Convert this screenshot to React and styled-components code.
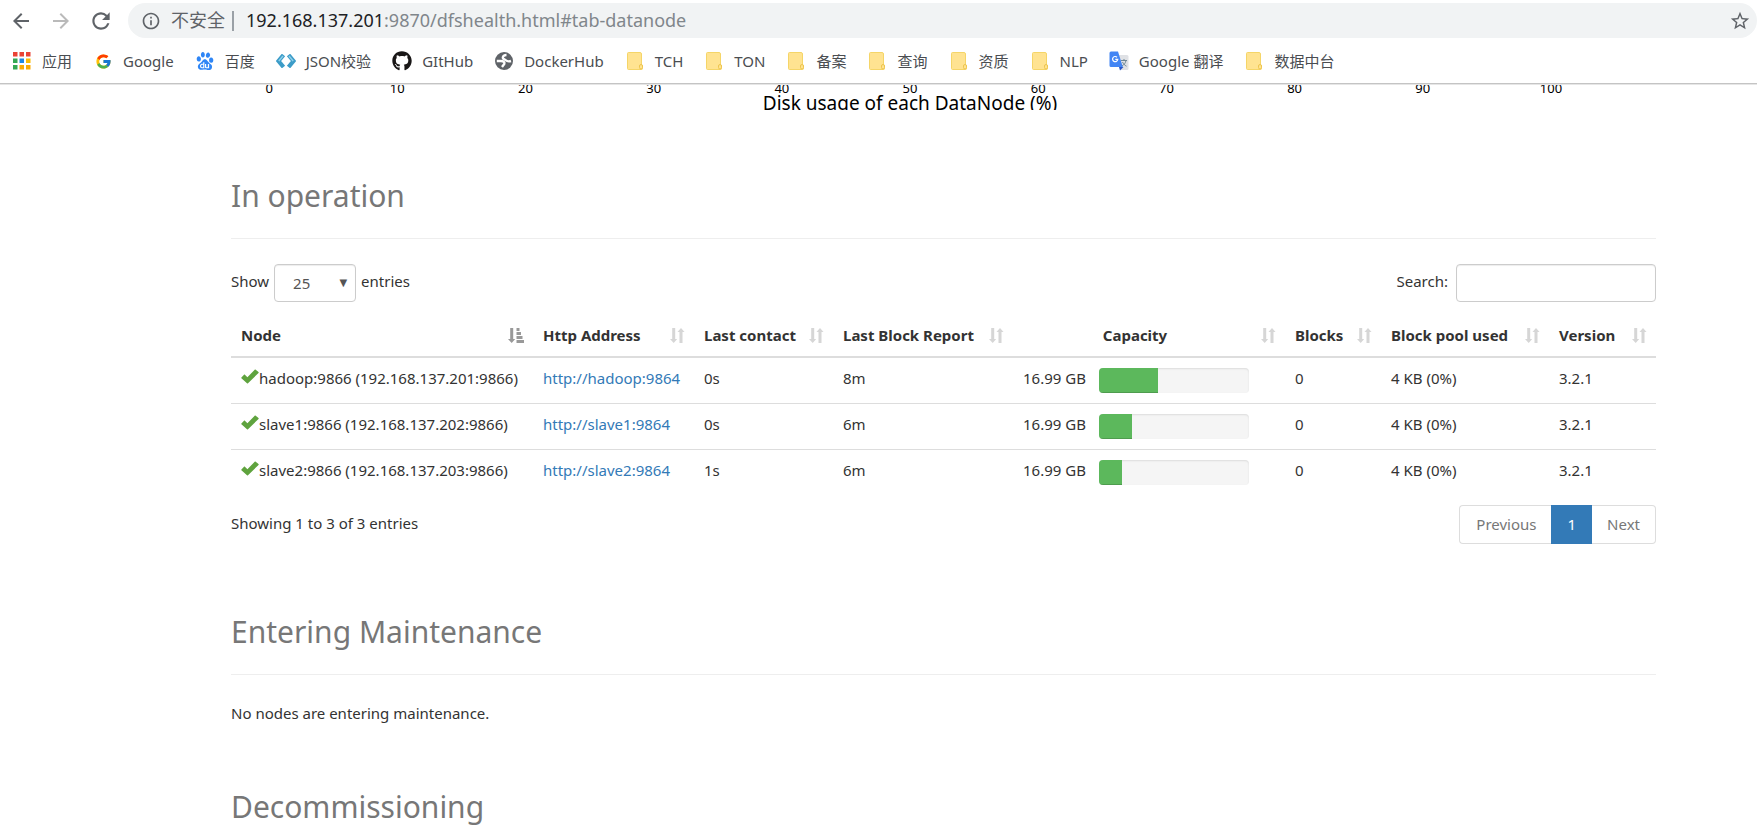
import React from 'react'
import styled, { createGlobalStyle } from 'styled-components'
import { FcGoogle } from 'react-icons/fc'
import { FaGithub } from 'react-icons/fa'
import { SiBaidu } from 'react-icons/si'
import { MdArrowBack, MdArrowForward, MdRefresh, MdInfoOutline, MdStarBorder } from 'react-icons/md'

const GlobalStyle = createGlobalStyle`
  * {
    box-sizing: border-box;
  }

  body {
    margin: 0;
    background: #fff;
    color: #333;
    font-family: 'Noto Sans', 'Noto Sans CJK SC', sans-serif;
    font-size: 15px;
    line-height: 21px;
  }

  button,
  input,
  select {
    font: inherit;
  }
`

/* ---------- icons ---------- */

const AppsIcon = () => (
  <svg width="18" height="18" viewBox="0 0 18 18">
    {['#ea4335', '#ea4335', '#ea4335', '#34a853', '#1e88e5', '#fbbc05', '#34a853', '#fbab05', '#fbab05'].map(
      (fill, i) => (
        <rect key={i} x={(i % 3) * 6.5} y={Math.floor(i / 3) * 6.5} width="4.5" height="4.5" fill={fill} />
      )
    )}
  </svg>
)

const JsonIcon = () => (
  <svg width="20" height="14" viewBox="0 0 20 14">
    <path d="M7.5 1 L2.5 7 L7.5 13" fill="none" stroke="#3c9cc8" strokeWidth="4.2" />
    <path d="M12.5 1 L17.5 7 L12.5 13" fill="none" stroke="#3c9cc8" strokeWidth="4.2" />
    <path d="M7 2 L2.8 7" stroke="#8ed0ea" strokeWidth="1.4" />
    <path d="M13 2 L17.2 7" stroke="#8ed0ea" strokeWidth="1.4" />
  </svg>
)

const GlobeIcon = () => (
  <svg width="18" height="18" viewBox="0 0 18 18">
    <circle cx="9" cy="9" r="9" fill="#5f6368" />
    <g fill="none" stroke="#fff" strokeWidth="2.4">
      <path d="M11.5 3C7.5 3 7 6.500 9 7.200S11.500 10.500 16 9" />
      <path d="M1.800 9H6c2.500 0 4 1.300 3.300 3L7 15" />
    </g>
  </svg>
)

const FolderIcon = () => (
  <svg width="16" height="18" viewBox="0 0 16 18">
    <path
      d="M1.5.5H13A1.5 1.5 0 0 1 14.5 2v10.5l1 .8v3.2a1 1 0 0 1-1 1h-13a1 1 0 0 1-1-1v-15a1 1 0 0 1 1-1z"
      fill="#ffe391"
      stroke="#f5d568"
    />
    <rect x="12.5" y="12.5" width="3" height="4.5" rx="1.5" fill="#ffe391" stroke="#eec54e" />
  </svg>
)

const TranslateIcon = () => (
  <svg width="20" height="20" viewBox="0 0 20 20">
    <path d="M8 4h10a1.5 1.5 0 0 1 1.5 1.5v12a1.5 1.5 0 0 1-1.5 1.5h-7z" fill="#dfe1e5" />
    <path d="M12 9.5h6M15 8v1.5M17 9.5c-.5 2.5-2 4.5-4 5.5M13.5 11c.8 1.8 2.2 3.2 4 4.2" fill="none" stroke="#6f8794" />
    <path d="M11 19.5l3.5-3.5H10z" fill="#2a56c6" />
    <path d="M2 .5h7L13.8 16H2a1.5 1.5 0 0 1-1.5-1.5V2A1.5 1.5 0 0 1 2 .5z" fill="#4285f4" />
    <path d="M8 6.2a2.6 2.6 0 1 0 .8 2.1H6.3" fill="none" stroke="#fff" strokeWidth="1.2" />
  </svg>
)

const OkIcon = () => (
  <svg width="18" height="15" viewBox="0 0 18 15">
    <path
      d="M.4 8.5L3 5.8c.3-.3.6-.3.9 0l2.5 2.4L13.7.7c.3-.3.7-.3 1 0l2.8 2.4c.3.3.3.6 0 .9L7 14.2c-.3.3-.7.3-1 0L.4 9.3c-.2-.3-.2-.5 0-.8z"
      fill="#5fa33e"
    />
  </svg>
)

const SortIcon = () => (
  <svg width="15" height="15" viewBox="0 0 15 15" fill="#d6d6d6">
    <path d="M2.2 0h3v11h2L3.7 15 0 11h2.2z" />
    <path d="M9.5 15h3V4h2L11 0 7.5 4h2z" />
  </svg>
)

const SortAscIcon = () => (
  <svg width="16" height="15" viewBox="0 0 16 15" fill="#999">
    <path d="M2.2 0h3v11h2L3.7 15 0 11h2.2z" />
    <path d="M8.5 0h3v3h-3zM8.5 4H13v3H8.5zM8.5 8h6v3h-6zM8.5 12H16v3H8.5z" />
  </svg>
)

/* ---------- browser bar ---------- */

const Browser = styled.header`
  padding-bottom: 1px;
  background: linear-gradient(#e6e6e6, #e6e6e6) bottom / 100% 1px no-repeat;
`

const Toolbar = styled.div`
  display: flex;
  align-items: center;
  gap: 14px;
  padding: 3px 0 0 8px;
`

const NavButton = styled.button`
  display: flex;
  align-items: center;
  justify-content: center;
  width: 26px;
  height: 26px;
  padding: 0;
  border: 0;
  background: none;
  color: ${({ disabled }) => (disabled ? '#bababa' : '#5f6368')};
`

const AddressBar = styled.div`
  flex: 1;
  display: flex;
  align-items: center;
  height: 35px;
  padding: 0 6px 0 13px;
  border-radius: 18px;
  background: #f1f3f4;
  color: #5f6368;
  font-size: 18px;
  line-height: 24px;
`

const Unsafe = styled.span`
  margin-left: 10px;
  padding: 0 7px 2px 0;
`

const Url = styled.span`
  flex: 1;
  padding: 0 0 2px 12px;
  color: #80868b;

  b {
    color: #202124;
    font-weight: 400;
  }
`

const UrlDivider = styled.span`
  width: 2px;
  height: 20px;
  background: #9aa0a6;
`

const Bookmarks = styled.nav`
  display: flex;
  gap: 21px;
  height: 46px;
  padding: 1px 12px 0;
  border-bottom: 1px solid #c4c4c4;
  white-space: nowrap;
`

const Bookmark = styled.a`
  display: flex;
  align-items: center;
  gap: 10px;
  color: #4a4d51;
  text-decoration: none;
`

const BookmarkIcon = styled.span`
  display: flex;
  justify-content: center;
  width: 20px;
`

const bookmarks = [
  { label: '应用', icon: <AppsIcon /> },
  { label: 'Google', icon: <FcGoogle size={17} /> },
  { label: '百度', icon: <SiBaidu size={18} color="#2f86f6" /> },
  { label: 'JSON校验', icon: <JsonIcon /> },
  { label: 'GItHub', icon: <FaGithub size={20} color="#191717" /> },
  { label: 'DockerHub', icon: <GlobeIcon /> },
  { label: 'TCH', icon: <FolderIcon /> },
  { label: 'TON', icon: <FolderIcon /> },
  { label: '备案', icon: <FolderIcon /> },
  { label: '查询', icon: <FolderIcon /> },
  { label: '资质', icon: <FolderIcon /> },
  { label: 'NLP', icon: <FolderIcon /> },
  { label: 'Google 翻译', icon: <TranslateIcon /> },
  { label: '数据中台', icon: <FolderIcon /> },
]

/* ---------- page ---------- */

const Window = styled.div`
  height: 100vh;
  overflow: hidden;
`

// the chart is scrolled half out of view, only its axis and title are left
const Chart = styled.div`
  height: 25px;
  margin: 0 142px 0 205px;
  overflow: hidden;
  color: #000;
  text-align: center;
`

const Axis = styled.div`
  display: flex;
  margin-top: -3px;
  font-size: 13px;
  line-height: 13px;

  span {
    flex: 1;
  }
`

const ChartTitle = styled.div`
  font-size: 19px;
  line-height: 16px;
`

const Main = styled.main`
  padding: 0 101px 0 231px;
`

const Heading = styled.h2`
  margin: ${({ $top }) => $top}px 0 25px;
  padding-bottom: 22px;
  border-bottom: 1px solid #eee;
  color: #777;
  font-size: 30px;
  font-weight: 400;
  line-height: 40px;
`

const Controls = styled.div`
  display: flex;
  justify-content: space-between;
`

const Field = styled.label`
  display: flex;
  gap: ${({ $gap }) => $gap}px;
  line-height: 35px;
`

const SelectBox = styled.span`
  position: relative;

  &::after {
    content: '▼';
    position: absolute;
    top: 1px;
    right: 9px;
    color: #555;
    font-family: 'DejaVu Sans', sans-serif;
    font-size: 10px;
    pointer-events: none;
  }
`

const inputBox = `
  height: 38px;
  border: 1px solid #ccc;
  border-radius: 4px;
  background: #fff;
  box-shadow: inset 0 1px 1px rgba(0, 0, 0, 0.075);
  color: #555;
`

const Select = styled.select`
  ${inputBox}
  display: block;
  width: 82px;
  padding: 0 18px;
  appearance: none;
`

const SearchInput = styled.input`
  ${inputBox}
  width: 200px;
  padding: 0 12px;
`

const Table = styled.table`
  width: 100%;
  margin: 13px 0 10px;
  border-collapse: separate;
  border-spacing: 0;
  table-layout: fixed;
  white-space: nowrap;
`

const Th = styled.th`
  width: ${({ $width }) => ($width ? `${$width}px` : 'auto')};
  padding: 10px 9px 10px 10px;
  border-bottom: 2px solid #ddd;
  text-align: left;
`

const ThInner = styled.div`
  display: flex;
  align-items: center;
  justify-content: space-between;

  span {
    flex: 1;
    padding-right: ${({ $center }) => ($center ? 14 : 0)}px;
    text-align: ${({ $center }) => ($center ? 'center' : 'left')};
  }
`

const Td = styled.td`
  height: 45px;
  padding: 10px;
  vertical-align: top;

  tr + tr & {
    height: 46px;
    border-top: 1px solid #ddd;
  }
`

const Link = styled.a`
  color: #337ab7;
  text-decoration: none;
`

const Capacity = styled.div`
  display: flex;
  justify-content: space-between;
  padding-right: 26px;
`

const Progress = styled.div`
  width: 150px;
  height: 25px;
  overflow: hidden;
  border-radius: 4px;
  background: #f5f5f5;
  box-shadow: inset 0 1px 2px rgba(0, 0, 0, 0.1);
`

const ProgressBar = styled.div`
  height: 100%;
  background: #5cb85c;
  box-shadow: inset 0 -1px 0 rgba(0, 0, 0, 0.15);
`

const Footer = styled.div`
  display: flex;
  justify-content: space-between;
  line-height: 37px;
`

const Pagination = styled.div`
  display: flex;
`

const PageButton = styled.button`
  height: 39px;
  padding: 0 15px;
  border: 1px solid ${({ $active }) => ($active ? '#337ab7' : '#ddd')};
  background: ${({ $active }) => ($active ? '#337ab7' : '#fff')};
  color: ${({ $active }) => ($active ? '#fff' : '#777')};

  &:first-child {
    padding: 0 15px 0 16px;
    border-right: 0;
    border-radius: 4px 0 0 4px;
  }

  &:last-child {
    border-left: 0;
    border-radius: 0 4px 4px 0;
  }
`

const Text = styled.p`
  margin: 0;
  padding-top: 3px;
`

const columns = [
  { label: 'Node', sorted: true },
  { label: 'Http Address', width: 161 },
  { label: 'Last contact', width: 139 },
  { label: 'Last Block Report', width: 180 },
  { label: 'Capacity', width: 272, center: true },
  { label: 'Blocks', width: 96 },
  { label: 'Block pool used', width: 168 },
  { label: 'Version', width: 107 },
]

const nodes = [
  { name: 'hadoop', ip: '192.168.137.201', contact: '0s', report: '8m', used: 39 },
  { name: 'slave1', ip: '192.168.137.202', contact: '0s', report: '6m', used: 22 },
  { name: 'slave2', ip: '192.168.137.203', contact: '1s', report: '6m', used: 15 },
]

const ticks = [0, 10, 20, 30, 40, 50, 60, 70, 80, 90, 100]

const NodeRow = ({ node }) => (
  <tr>
    <Td>
      <OkIcon />
      {`${node.name}:9866 (${node.ip}:9866)`}
    </Td>
    <Td>
      <Link href={`http://${node.name}:9864`}>{`http://${node.name}:9864`}</Link>
    </Td>
    <Td>{node.contact}</Td>
    <Td>{node.report}</Td>
    <Td>
      <Capacity>
        16.99 GB
        <Progress>
          <ProgressBar style={{ width: `${node.used}%` }} />
        </Progress>
      </Capacity>
    </Td>
    <Td>0</Td>
    <Td>4 KB (0%)</Td>
    <Td>3.2.1</Td>
  </tr>
)

const App = () => (
  <Window>
    <GlobalStyle />
    <Browser>
      <Toolbar>
        <NavButton aria-label="Back">
          <MdArrowBack size={24} />
        </NavButton>
        <NavButton aria-label="Forward" disabled>
          <MdArrowForward size={24} />
        </NavButton>
        <NavButton aria-label="Reload">
          <MdRefresh size={26} />
        </NavButton>
        <AddressBar>
          <MdInfoOutline size={20} />
          <Unsafe>不安全</Unsafe>
          <UrlDivider />
          <Url>
            <b>192.168.137.201</b>:9870/dfshealth.html#tab-datanode
          </Url>
          <MdStarBorder size={22} />
        </AddressBar>
      </Toolbar>
      <Bookmarks>
        {bookmarks.map(({ label, icon }) => (
          <Bookmark key={label} href="#">
            <BookmarkIcon>{icon}</BookmarkIcon>
            {label}
          </Bookmark>
        ))}
      </Bookmarks>
    </Browser>

    <Chart>
      <Axis>
        {ticks.map(tick => (
          <span key={tick}>{tick}</span>
        ))}
      </Axis>
      <ChartTitle>Disk usage of each DataNode (%)</ChartTitle>
    </Chart>

    <Main>
      <Heading $top={66}>In operation</Heading>
      <Controls>
        <Field $gap={5}>
          Show
          <SelectBox>
            <Select defaultValue="25">
              <option>25</option>
              <option>50</option>
              <option>100</option>
            </Select>
          </SelectBox>
          entries
        </Field>
        <Field $gap={8}>
          Search:
          <SearchInput type="search" />
        </Field>
      </Controls>

      <Table>
        <thead>
          <tr>
            {columns.map(({ label, width, center, sorted }) => (
              <Th key={label} $width={width}>
                <ThInner $center={center}>
                  <span>{label}</span>
                  {sorted ? <SortAscIcon /> : <SortIcon />}
                </ThInner>
              </Th>
            ))}
          </tr>
        </thead>
        <tbody>
          {nodes.map(node => (
            <NodeRow key={node.name} node={node} />
          ))}
        </tbody>
      </Table>

      <Footer>
        <span>Showing 1 to 3 of 3 entries</span>
        <Pagination>
          <PageButton>Previous</PageButton>
          <PageButton $active>1</PageButton>
          <PageButton>Next</PageButton>
        </Pagination>
      </Footer>

      <Heading $top={68}>Entering Maintenance</Heading>
      <Text>No nodes are entering maintenance.</Text>

      <Heading $top={63}>Decommissioning</Heading>
    </Main>
  </Window>
)

export default App
